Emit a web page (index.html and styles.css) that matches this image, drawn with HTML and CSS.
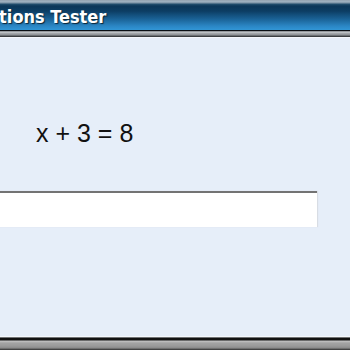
FILE: index.html
```html
<!DOCTYPE html>
<html>
<head>
<meta charset="utf-8">
<link rel="stylesheet" href="styles.css">
</head>
<body>
<div class="window">
  <div class="titlebar">
    <span class="title">Equations Tester</span>
  </div>
  <div class="titlerule"></div>
  <div class="content">
    <div class="equation">x + 3 = 8</div>
    <div class="answer"></div>
  </div>
  <div class="bottombar"></div>
</div>
</body>
</html>
```
FILE: styles.css
```css
html, body {
  margin: 0;
  padding: 0;
  width: 350px;
  height: 350px;
  overflow: hidden;
  background: #e6eef9;
}
.window {
  width: 350px;
  height: 350px;
  display: flex;
  flex-direction: column;
  overflow: hidden;
}
.titlebar {
  height: 30px;
  flex: none;
  background: linear-gradient(to bottom,
    #8796a4 0px, #a8b8c6 1px, #7d93a6 3px, #24506f 4px,
    #0b3658 6px, #0c3d63 11px, #1a6296 19px, #2b86c4 26px, #3196d6 30px);
  border-bottom: 1px solid #0a0f14;
  display: flex;
  align-items: center;
  overflow: hidden;
}
.title {
  font-family: "DejaVu Sans Condensed", "DejaVu Sans", sans-serif;
  font-weight: bold;
  font-size: 18px;
  color: #ffffff;
  text-shadow: 1px 1px 1px #0a2436;
  margin-left: -46px;
  white-space: nowrap;
  margin-top: 2px;
}
.titlerule {
  height: 6px;
  flex: none;
  background: linear-gradient(to bottom,
    #5a5e62 0px, #d0d4d8 1px, #a8acb0 2px, #8c9094 4px, #4c5054 5px, #2a2d30 6px);
}
.content {
  flex: 1;
  background: #e6eef9;
  border-top: 1px solid #f4f7fc;
  display: flex;
  flex-direction: column;
  position: relative;
}
.equation {
  font-family: "Liberation Sans", sans-serif;
  font-size: 25px;
  color: #111111;
  margin-top: 81px;
  margin-left: 36px;
  line-height: 28px;
}
.answer {
  margin-top: 44px;
  margin-left: -10px;
  width: 327px;
  height: 34px;
  background: #ffffff;
  border-top: 2px solid #737373;
  box-shadow: 1px 0 1px #d8dde4;
}
.bottombar {
  height: 13px;
  flex: none;
  border-top: 1px solid #f4f7fc;
  background: linear-gradient(to bottom,
    #cfd3d7 0px, #111111 1px, #111111 3px, #c4c4c4 4px, #a4a4a4 6px,
    #9a9a9a 9px, #8a8a8a 11px, #555555 12px, #333333 13px);
}
```
